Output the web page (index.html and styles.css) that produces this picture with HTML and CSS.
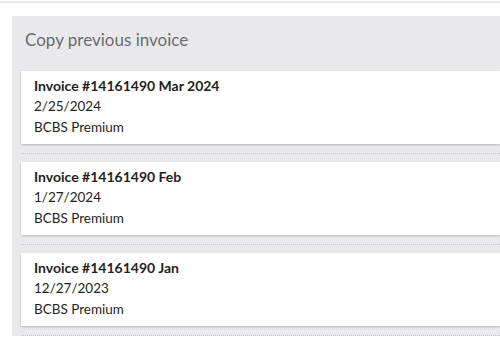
FILE: index.html
```html
<!DOCTYPE html>
<html lang="en">
<head>
    <meta charset="UTF-8">
    <meta name="viewport" content="width=device-width, initial-scale=1.0">
    <title>Copy previous invoice</title>
    <link rel="stylesheet" href="styles.css">
</head>
<body>

    <!-- Top divider -->
    <div class="top-rule"></div>

    <!-- Copy previous invoice panel -->
    <div class="panel">
        <div class="panel-title">Copy previous invoice</div>

        <div class="invoice-list">
            <div class="invoice-item">
                <div class="invoice-card">
                    <div class="invoice-name">Invoice #14161490 Mar 2024</div>
                    <div class="invoice-date">2/25/2024</div>
                    <div class="invoice-type">BCBS Premium</div>
                </div>
            </div>
            <div class="invoice-item">
                <div class="invoice-card">
                    <div class="invoice-name">Invoice #14161490 Feb</div>
                    <div class="invoice-date">1/27/2024</div>
                    <div class="invoice-type">BCBS Premium</div>
                </div>
            </div>
            <div class="invoice-item">
                <div class="invoice-card">
                    <div class="invoice-name">Invoice #14161490 Jan</div>
                    <div class="invoice-date">12/27/2023</div>
                    <div class="invoice-type">BCBS Premium</div>
                </div>
            </div>
        </div>
    </div>

</body>
</html>
```

FILE: styles.css
```css
/* Reset */
* {
    margin: 0;
    padding: 0;
    box-sizing: border-box;
}

body {
    font-family: 'Lato', 'Liberation Sans', sans-serif;
    background: #ffffff;
    color: #222222;
    overflow: hidden;
}

/* Thin line at the very top */
.top-rule {
    height: 3px;
    border-bottom: 2px solid #e9e9eb;
}

/* Grey panel */
.panel {
    margin: 13px 0 0 12px;
    background: #e9e9eb;
    padding: 12px 0 0 9px;
}

.panel-title {
    font-size: 17px;
    line-height: 24px;
    color: #6b6b6e;
    padding-left: 4px;
    margin-bottom: 19px;
}

/* Invoice cards */
.invoice-item {
    padding-bottom: 9px;
    border-bottom: 1px dotted #c4c4c8;
    margin-bottom: 8px;
}

.invoice-card {
    background: #ffffff;
    padding: 4px 13px 6px;
    font-size: 13.5px;
    line-height: 21px;
    color: #1f1f22;
    box-shadow: 0 1px 2px rgba(0, 0, 0, 0.22);
}

.invoice-name {
    font-size: 14px;
    font-weight: bold;
}
```
